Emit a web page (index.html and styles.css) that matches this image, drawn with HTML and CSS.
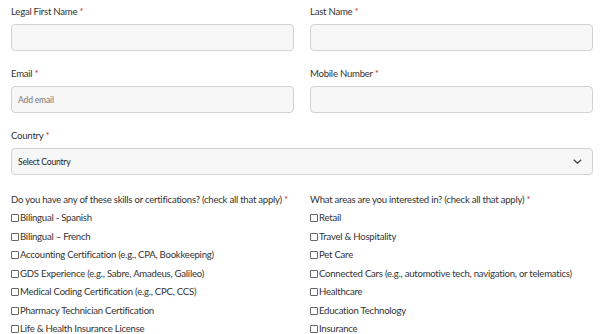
FILE: index.html
```html
<!DOCTYPE html>
<html lang="en">
<head>
  <meta charset="UTF-8" />
  <meta name="viewport" content="width=device-width, initial-scale=1.0"/>
  <title>Apply</title>
  <link rel="stylesheet" href="styles.css">
</head>
<body>
  <form class="apply-form">
    <div class="row">
      <div class="field">
        <label>Legal First Name <span class="req">*</span></label>
        <input type="text" />
      </div>
      <div class="field">
        <label>Last Name <span class="req">*</span></label>
        <input type="text" />
      </div>
    </div>

    <div class="row">
      <div class="field">
        <label>Email <span class="req">*</span></label>
        <input type="text" placeholder="Add email" />
      </div>
      <div class="field">
        <label>Mobile Number <span class="req">*</span></label>
        <input type="text" />
      </div>
    </div>

    <div class="field">
      <label>Country <span class="req">*</span></label>
      <div class="select">
        <span>Select Country</span>
        <svg width="9" height="5" viewBox="0 0 9 5"><path d="M0.8 0.8l3.7 3.4 3.7-3.4" fill="none" stroke="#444" stroke-width="1.3"/></svg>
      </div>
    </div>

    <div class="row checks">
      <div class="group">
        <div class="group-title">Do you have any of these skills or certifications? (check all that apply) <span class="req">*</span></div>
        <div class="check"><span class="box"></span>Bilingual - Spanish</div>
        <div class="check"><span class="box"></span>Bilingual – French</div>
        <div class="check"><span class="box"></span>Accounting Certification (e.g., CPA, Bookkeeping)</div>
        <div class="check"><span class="box"></span>GDS Experience (e.g., Sabre, Amadeus, Galileo)</div>
        <div class="check"><span class="box"></span>Medical Coding Certification (e.g., CPC, CCS)</div>
        <div class="check"><span class="box"></span>Pharmacy Technician Certification</div>
        <div class="check"><span class="box"></span>Life &amp; Health Insurance License</div>
      </div>
      <div class="group">
        <div class="group-title">What areas are you interested in? (check all that apply) <span class="req">*</span></div>
        <div class="check"><span class="box"></span>Retail</div>
        <div class="check"><span class="box"></span>Travel &amp; Hospitality</div>
        <div class="check"><span class="box"></span>Pet Care</div>
        <div class="check"><span class="box"></span>Connected Cars (e.g., automotive tech, navigation, or telematics)</div>
        <div class="check"><span class="box"></span>Healthcare</div>
        <div class="check"><span class="box"></span>Education Technology</div>
        <div class="check"><span class="box"></span>Insurance</div>
      </div>
    </div>
  </form>
</body>
</html>
```

FILE: styles.css
```css
* {
  box-sizing: border-box;
}
body {
  margin: 0;
  background-color: #fff;
  font-family: 'Lato', sans-serif;
  font-size: 9.6px;
  letter-spacing: -0.25px;
  color: #333;
}
.apply-form {
  padding: 5px 7px 0 11px;
}
.row {
  display: grid;
  grid-template-columns: 1fr 1fr;
  column-gap: 16px;
}
.field {
  margin-bottom: 16px;
}
.field label {
  display: block;
  line-height: 14px;
  margin-bottom: 5px;
}
.req {
  color: #c0392b;
}
.field input {
  display: block;
  width: 100%;
  height: 27px;
  border: 1px solid #d2d2d2;
  border-radius: 4px;
  background-color: #f7f7f7;
  padding: 0 6px;
  font-family: inherit;
  font-size: 8.6px;
  letter-spacing: -0.2px;
  color: #333;
}
.field input::placeholder {
  color: #777;
}
.select {
  height: 27px;
  border: 1px solid #d2d2d2;
  border-radius: 4px;
  background-color: #f7f7f7;
  padding: 0 10px 0 6px;
  display: flex;
  justify-content: space-between;
  align-items: center;
  font-size: 8.6px;
  color: #222;
}
.checks {
  margin-top: 10px;
}
.group-title {
  line-height: 18px;
  white-space: nowrap;
}
.check {
  line-height: 18.5px;
  display: flex;
  align-items: center;
  white-space: nowrap;
}
.box {
  width: 8px;
  height: 8px;
  border: 1px solid #666;
  border-radius: 1px;
  margin-right: 1px;
}
```
